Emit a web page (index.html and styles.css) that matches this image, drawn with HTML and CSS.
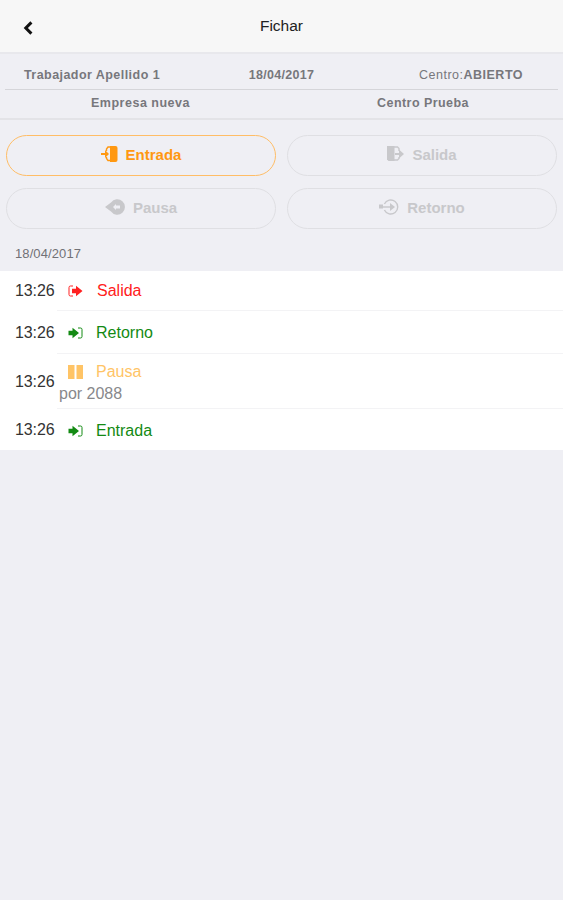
FILE: index.html
```html
<!DOCTYPE html>
<html lang="es">
<head>
<meta charset="utf-8">
<title>Fichar</title>
<link rel="stylesheet" href="styles.css">
</head>
<body>
<header class="bar">
  <svg class="back" viewBox="0 0 10 14"><path d="M8.400 1.400 2.800 7l5.600 5.600"/></svg>
  <h1 class="title">Fichar</h1>
  <span></span>
</header>
<section class="info">
  <div class="info-row three">
    <b class="worker">Trabajador Apellido 1</b><b class="date">18/04/2017</b><span class="state">Centro:<b>ABIERTO</b></span>
  </div>
  <div class="info-row two">
    <b class="company">Empresa nueva</b><b class="center">Centro Prueba</b>
  </div>
</section>
<main>
  <div class="actions">
    <button class="action active">
      <svg width="17" height="18" viewBox="0 0 17 18"><path fill="currentColor" d="M9 1h5.500q2 0 2 2v12q0 2-2 2H9z"/><path class="line" d="M10 2H7L5.500 4v2M10 15.500H7l-1.500-2V12"/><path fill="currentColor" d="M0 8h4V5l4 4-4 4v-3H0z"/></svg>
      <span>Entrada</span>
    </button>
    <button class="action" disabled>
      <svg width="17" height="18" viewBox="0 0 17 18"><path fill="currentColor" d="M0 1h7.500v15H1.500L0 14.500z"/><path class="line" d="M7 2h3.500L12 3.500V6M7 15h3.500l1.500-1.500V12"/><path fill="currentColor" d="M8 8h4V4.500L17 9l-5 4.500V10H8z"/></svg>
      <span>Salida</span>
    </button>
    <button class="action" disabled>
      <svg width="20" height="18" viewBox="0 0 20 18"><path fill="currentColor" fill-rule="evenodd" d="M0 9l6-4.500A7.700 7.700 0 1 1 6 13.500zM8 9l3 3v-1.500h4v-3h-4V6z"/></svg>
      <span>Pausa</span>
    </button>
    <button class="action" disabled>
      <svg width="20" height="18" viewBox="0 0 20 18"><path class="line" d="M5.400 6a7 7 0 1 1 0 6"/><path class="line" d="M1 9h12"/><path fill="currentColor" d="M0 6.500h4v4H0zM11 5l5 4-5 4z"/></svg>
      <span>Retorno</span>
    </button>
  </div>
  <h2 class="day">18/04/2017</h2>
  <ul class="log">
    <li class="entry r1">
      <time>13:26</time>
      <div class="detail"><div class="kind out"><svg width="15" height="12" viewBox="0 0 15 12"><path class="thin" d="M5 1H2.500Q1 1 1 2.500v7Q1 11 2.500 11H5"/><path fill="currentColor" d="M4 3.800h4V.800L14.500 6 8 11.200v-3H4z"/></svg><span class="t-salida">Salida</span></div></div>
    </li>
    <li class="entry r2">
      <time>13:26</time>
      <div class="detail"><div class="kind in"><svg width="15" height="12" viewBox="0 0 15 12"><path class="thin" d="M10 1h2.500Q14 1 14 2.500v7q0 1.500-1.500 1.500H10"/><path fill="currentColor" d="M.500 3.800h4V.800L11 6l-6.500 5.200v-3h-4z"/></svg><span>Retorno</span></div></div>
    </li>
    <li class="entry r3">
      <time>13:26</time>
      <div class="detail"><div class="kind pause"><svg width="15" height="14" viewBox="0 0 15 14"><path fill="currentColor" d="M0 0h6.500v14H0zM8.500 0H15v14H8.500z"/></svg><span>Pausa</span></div><p class="note">por 2088</p></div>
    </li>
    <li class="entry r4">
      <time>13:26</time>
      <div class="detail"><div class="kind in"><svg width="15" height="12" viewBox="0 0 15 12"><path class="thin" d="M10 1h2.500Q14 1 14 2.500v7q0 1.500-1.500 1.500H10"/><path fill="currentColor" d="M.500 3.800h4V.800L11 6l-6.500 5.200v-3h-4z"/></svg><span>Entrada</span></div></div>
    </li>
  </ul>
</main>
</body>
</html>
```
FILE: styles.css
```css
* { box-sizing: border-box; }
body {
  margin: 0;
  min-height: 900px;
  background: #efeff4;
  color: #333;
  font-family: "Liberation Sans", Arial, sans-serif;
}
.bar {
  display: grid;
  grid-template-columns: 60px 1fr 60px;
  height: 54px;
  background: #f7f7f7;
  border-bottom: 2px solid #e8e8ec;
}
.back {
  width: 10px;
  height: 14px;
  margin: 21px 0 0 23px;
  fill: none;
  stroke: #111;
  stroke-width: 3;
}
.title {
  margin: 16px 0 0;
  text-align: center;
  font-size: 15.5px;
  font-weight: 400;
  line-height: 20px;
  color: #222;
}
.info {
  height: 66px;
  padding: 6px 5px 0;
  border-bottom: 2px solid #e3e3e7;
  color: #77777c;
  font-size: 12.5px;
  text-align: center;
}
.info-row { display: grid; }
.three {
  grid-template-columns: 174px 205px 174px;
  height: 30px;
  line-height: 31px;
  border-bottom: 1px solid #d5d5d9;
}
.two {
  grid-template-columns: 271px 1fr;
  line-height: 26px;
}
.worker { letter-spacing: .45px; }
.date { letter-spacing: .3px; }
.state {
  padding-left: 0;
  letter-spacing: .5px;
}
.company { letter-spacing: .5px; }
.center {
  padding-left: 12px;
  letter-spacing: .45px;
}
.actions {
  display: grid;
  grid-template-columns: 270px 270px;
  grid-auto-rows: 41px;
  gap: 12px 11px;
  padding: 15px 6px 0;
}
.action {
  display: flex;
  align-items: center;
  justify-content: center;
  padding: 0 0 1px;
  border: 1px solid #dfdfe3;
  border-radius: 22px;
  background: transparent;
  color: #c8c8cb;
  font: 700 15px/20px "Liberation Sans", Arial, sans-serif;
}
.active {
  border-color: #ffbd66;
  color: #ff9811;
}
.action svg { margin: 0 8px 2px 0; }
.line {
  fill: none;
  stroke: currentColor;
  stroke-width: 1.4;
}
.day {
  height: 42px;
  margin: 0;
  padding: 15px 0 0 15px;
  color: #717176;
  font-size: 13px;
  font-weight: 400;
  line-height: 20px;
  letter-spacing: .1px;
}
.log {
  margin: 0;
  padding: 0;
  list-style: none;
  background: #fff;
  font-size: 16px;
}
.entry {
  display: flex;
  align-items: center;
  padding-left: 15px;
}
.entry time {
  width: 42px;
  letter-spacing: -.1px;
}
.detail {
  display: flex;
  flex: 1;
  flex-direction: column;
  justify-content: center;
  height: 100%;
  border-bottom: 1px solid #f3f3f5;
}
.r1 { height: 40px; }
.r2 { height: 43px; }
.r3 { height: 55px; }
.r4 { height: 41px; }
.r2 .detail { padding-top: 2px; }
.r3 .detail { padding-top: 4px; }
.r4 { padding-top: 1px; }
.r4 .detail {
  padding-top: 1px;
  border-bottom: 0;
}
.kind {
  display: flex;
  align-items: center;
  padding-left: 11px;
  line-height: 20px;
}
.kind svg { margin-right: 13px; }
.kind .t-salida { padding-left: 1px; }
.thin {
  fill: none;
  stroke: currentColor;
  stroke-width: 1;
}
.out { color: #ff2020; }
.in { color: #138a13; }
.pause { color: #ffc466; }
.note {
  margin: 2px 0 0 2px;
  color: #88888b;
  line-height: 20px;
}
```
